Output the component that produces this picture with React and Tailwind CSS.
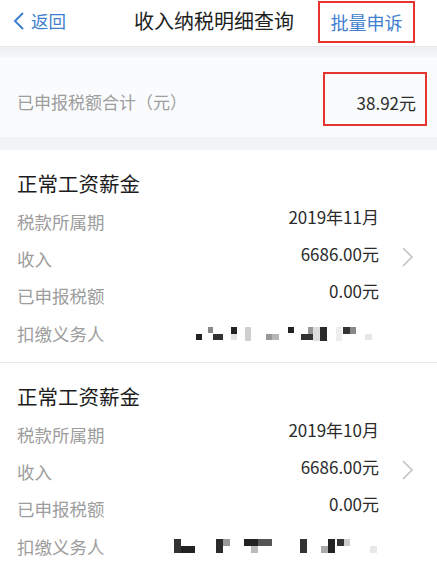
import React from 'react';

const font = { fontFamily: '"Noto Sans CJK SC", "Noto Sans", sans-serif' };

// mosaic blocks: [x, y, w, h, colour], x measured from the left of the page
const records = [
  {
    period: '2019年11月',
    income: '6686.00元',
    tax: '0.00元',
    blocks: [
      [196, 8, 6, 6, '#222'], [208, 1, 5, 6, '#888'], [213, 8, 10, 6, '#333'], [231, 1, 6, 7, '#222'],
      [231, 8, 6, 6, '#e2e2e2'], [245, 1, 6, 14, '#cfcfcf'], [266, 8, 6, 6, '#999'], [272, 8, 7, 6, '#b5b5b5'],
      [288, 1, 6, 6, '#222'], [301, 8, 12, 6, '#333'], [308, 1, 5, 7, '#999'], [313, 1, 7, 14, '#ddd'],
      [320, 1, 7, 14, '#2a2a2a'], [336, 1, 6, 14, '#eee'], [343, 1, 7, 7, '#333'], [350, 1, 6, 7, '#888'],
      [365, 8, 7, 6, '#e6e6e6'],
    ],
  },
  {
    period: '2019年10月',
    income: '6686.00元',
    tax: '0.00元',
    blocks: [
      [174, 0, 7, 14, '#333'], [181, 7, 14, 7, '#222'], [216, 0, 7, 14, '#2a2a2a'], [223, 0, 7, 7, '#999'],
      [244, 0, 14, 7, '#222'], [251, 7, 7, 7, '#bbb'], [258, 0, 14, 7, '#555'], [300, 0, 7, 14, '#333'],
      [321, 7, 7, 7, '#aaa'], [328, 0, 7, 14, '#222'], [337, 0, 7, 7, '#333'], [344, 0, 6, 7, '#ccc'],
      [370, 7, 7, 7, '#e8e8e8'],
    ],
  },
];

const Row = ({ label, children, chevron }) => (
  <div className="flex items-center h-[37px]">
    <span className="flex-1 text-[17.5px] text-[#9d9d9d] pt-[6px]">{label}</span>
    <span className="text-[17px] text-[#2b2b2b] pb-[6px]">{children}</span>
    <span className="w-[58px] flex justify-center">
      {chevron && (
        <svg width="14" height="22" viewBox="0 0 14 22">
          <path d="M2 2 L11 11 L2 20" fill="none" stroke="#c4c4c4" strokeWidth="1.6" />
        </svg>
      )}
    </span>
  </div>
);

const Card = ({ rec }) => (
  <div className="bg-white pl-[17px] pt-[18px] pb-[12px] border-b border-[#e9eaec]">
    <div className="text-[20.5px] text-[#1c1c1c] h-[33px] leading-[30px]">正常工资薪金</div>
    <Row label="税款所属期">{rec.period}</Row>
    <Row label="收入" chevron>{rec.income}</Row>
    <Row label="已申报税额">{rec.tax}</Row>
    <div className="flex items-center h-[38px] pt-[6px]">
      <span className="w-[150px] text-[17.5px] text-[#9d9d9d]">扣缴义务人</span>
      <svg width="220" height="16">
        {rec.blocks.map(([x, y, w, h, c], i) => (
          <rect key={i} x={x - 167} y={y} width={w} height={h} fill={c} />
        ))}
      </svg>
    </div>
  </div>
);

export default function App() {
  return (
    <div className="w-[437px] h-[569px] overflow-hidden bg-[#f1f2f4]" style={font}>
      {/* Header */}
      <div className="h-[47px] bg-white flex items-start border-b border-[#e6e7ea]">
        <div className="flex-1 flex items-center h-[42px] pl-[13px] text-[#3f7fcf] text-[17.5px]">
          <svg width="13" height="20" viewBox="0 0 13 20" className="mr-[5px]">
            <path d="M10 2 L2 10 L10 18" fill="none" stroke="#3f7fcf" strokeWidth="2" />
          </svg>
          返回
        </div>
        <div className="h-[42px] flex items-center text-[20px] text-[#1e1e1e]">收入纳税明细查询</div>
        <div className="flex-1 flex justify-end pr-[22px] pt-[1px]">
          <div className="w-[97px] h-[42px] border-2 border-[#e5332f] flex items-center justify-center text-[18px] text-[#3f7fcf]">
            批量申诉
          </div>
        </div>
      </div>

      <div className="h-[10px] bg-gradient-to-b from-[#eceef1] to-[#f6f7f9]" />

      {/* Summary */}
      <div className="h-[80px] bg-[#fafbfc] flex items-start pl-[17px] pr-[10px]">
        <span className="flex-1 mt-[32px] text-[17px] text-[#9d9d9d]">已申报税额合计（元）</span>
        <div className="mt-[15px] w-[104px] h-[54px] border-2 border-[#e5332f] flex items-center justify-end pr-[9px] pt-[7px] text-[17px] text-[#2b2b2b]">
          38.92元
        </div>
      </div>

      <div className="h-[13px] bg-[#f1f3f5]" />

      {records.map((rec, i) => (
        <Card key={i} rec={rec} />
      ))}
    </div>
  );
}
